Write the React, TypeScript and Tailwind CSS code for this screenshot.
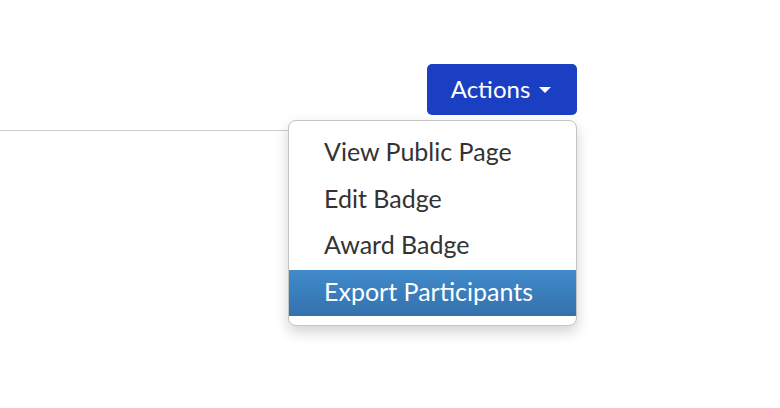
import React from 'react';

const items = ['View Public Page', 'Edit Badge', 'Award Badge', 'Export Participants'];

export default function App() {
    return (
        <div
            className="w-[780px] h-[408px] bg-white"
            style={{ fontFamily: 'Lato, "Noto Sans", sans-serif' }}
        >
            <div className="w-[577px] pt-[64px] pb-[15px] border-b border-[#cfcfcf] flex justify-end">
                <div className="relative">
                    <button
                        type="button"
                        className="h-[51px] w-[150px] rounded-[5px] bg-[#1a3fc2] text-white text-[24px] flex items-center justify-center gap-[9px] pr-[2px]"
                    >
                        <span className="-mt-[1px]">Actions</span>
                        <span className="inline-block w-0 h-0 border-l-[6px] border-r-[6px] border-t-[6px] border-l-transparent border-r-transparent border-t-white mt-[1px]" />
                    </button>

                    <ul className="absolute right-0 top-[56px] w-[289px] bg-white border border-[#c4c4c4] rounded-[8px] py-[9px] shadow-[0_6px_14px_rgba(0,0,0,0.18)] overflow-hidden">
                        {items.map((item, i) => (
                            <li
                                key={item}
                                className={
                                    i === 3
                                        ? 'h-[46.5px] pl-[35px] pb-[3px] flex items-center text-[25px] text-white bg-gradient-to-b from-[#418bcb] to-[#3371ad]'
                                        : 'h-[46.5px] pl-[35px] pb-[3px] flex items-center text-[25px] text-[#333333]'
                                }
                            >
                                {item}
                            </li>
                        ))}
                    </ul>
                </div>
            </div>
        </div>
    );
}
